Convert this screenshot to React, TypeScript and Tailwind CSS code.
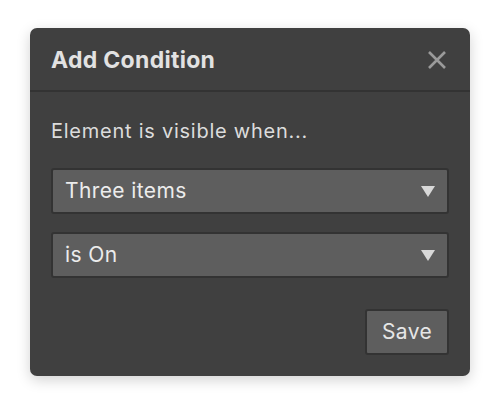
export default function App() {
  return (
    <div className="w-[500px] h-[408px] bg-white flex items-start justify-center pt-[28px] font-['Inter',sans-serif]">
      <div className="w-[440px] h-[348px] rounded-[7px] bg-[#404040] shadow-[0_4px_14px_rgba(0,0,0,0.18)] flex flex-col">
        <div className="h-[64px] flex items-center justify-between pl-[21px] pr-[23px] border-b-2 border-[#333333]">
          <h2 className="mt-[2px] text-[23px] font-bold text-[#e2e2e2] tracking-[0.3px]">Add Condition</h2>
          <svg width="20" height="20" viewBox="0 0 20 20" className="text-[#9a9a9a] mt-[2px]">
            <path d="M2 2L18 18M18 2L2 18" stroke="currentColor" strokeWidth="2.6" strokeLinecap="butt" />
          </svg>
        </div>
        <div className="flex flex-col px-[21px] pt-[27px]">
          <p className="text-[20px] text-[#dcdcdc] leading-[24px] tracking-[0.75px]">Element is visible when...</p>
          <div className="mt-[25px] flex flex-col gap-[18px]">
            <Select label="Three items" />
            <Select label="is On" />
          </div>
          <div className="flex justify-end mt-[31px]">
            <button className="h-[46px] w-[84px] rounded-[3px] bg-[#5e5e5e] border-2 border-[#333333] text-[21px] tracking-[0.4px] text-[#e6e6e6]">
              Save
            </button>
          </div>
        </div>
      </div>
    </div>
  );
}

function Select({ label }: { label: string }) {
  return (
    <div className="h-[46px] rounded-[3px] bg-[#5e5e5e] border-2 border-[#333333] flex items-center justify-between pl-[12px] pr-[12px]">
      <span className="text-[21px] tracking-[0.4px] text-[#ececec]">{label}</span>
      <svg width="14" height="11" viewBox="0 0 14 11">
        <path d="M0 0H14L7 11Z" fill="#d8d8d8" />
      </svg>
    </div>
  );
}
